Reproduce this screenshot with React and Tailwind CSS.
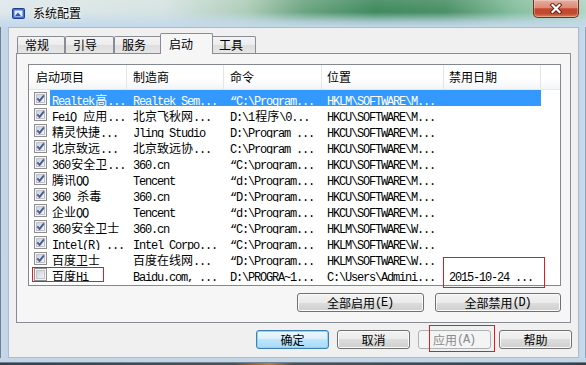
import React from "react";

const NARROW = /[\x20-\x7e\u201c]+|[^\x20-\x7e\u201c]+/g;
function Txt({ s }) {
  const parts = s.match(NARROW) || [];
  return parts.map((p, i) =>
    /^[\x20-\x7e\u201c]/.test(p) ? (
      <span key={i} className="font-['Liberation_Mono',monospace] text-[12px] tracking-[-1.2px] pr-[1.2px]">{p}</span>
    ) : (
      <span key={i} className="font-['Noto_Sans_CJK_SC',sans-serif] text-[12px]">{p}</span>
    )
  );
}

function Check({ on }) {
  return (
    <svg width="13" height="13" viewBox="0 0 13 13" className="shrink-0">
      <defs>
        <linearGradient id="cbg" x1="0" y1="0" x2="1" y2="1">
          <stop offset="0" stopColor="#c9ced6" />
          <stop offset="1" stopColor="#f7f7f7" />
        </linearGradient>
      </defs>
      <rect x="0.5" y="0.5" width="12" height="12" fill="#f5f5f5" stroke="#8e8f8f" />
      <rect x="2.5" y="2.5" width="8" height="8" fill="url(#cbg)" stroke="#bfc3c9" />
      {on && <path d="M3.3 6.3 L5.6 8.9 L10 3.4" fill="none" stroke="#4a5f97" strokeWidth="1.9" />}
    </svg>
  );
}

const M = "HKCU\\SOFTWARE\\M...";
const LM = "HKLM\\SOFTWARE\\M...";
const W = "HKLM\\SOFTWARE\\W...";
const rows = [
  [true, "Realtek高...", "Realtek Sem...", "\u201cC:\\Program...", LM, ""],
  [true, "FeiQ 应用...", "北京飞秋网...", "D:\\1程序\\0...", M, ""],
  [true, "精灵快捷...", "Jling Studio", "D:\\Program ...", M, ""],
  [true, "北京致远...", "北京致远协...", "C:\\Program ...", M, ""],
  [true, "360安全卫...", "360.cn", "\u201cC:\\program...", M, ""],
  [true, "腾讯QQ", "Tencent", "\u201cd:\\Program...", M, ""],
  [true, "360 杀毒", "360.cn", "\u201cD:\\Program...", M, ""],
  [true, "企业QQ", "Tencent", "\u201cd:\\Program...", M, ""],
  [true, "360安全卫士", "360.cn", "\u201cC:\\Program...", W, ""],
  [true, "Intel(R) ...", "Intel Corpo...", "\u201cC:\\Program...", W, ""],
  [true, "百度卫士", "百度在线网...", "\u201cD:\\Program...", W, ""],
  [false, "百度Hi", "Baidu.com, ...", "D:\\PROGRA~1...", "C:\\Users\\Admini...", "2015-10-24 ..."],
];

const headers = ["启动项目", "制造商", "命令", "位置", "禁用日期"];
const hCls = [
  "w-[98px] pl-[7px]",
  "w-[97px] pl-[6px]",
  "w-[98px] pl-[6px]",
  "w-[122px] pl-[5px]",
  "w-[97px] pl-[5px]",
];
const cCls = ["w-[97px] pl-[6px]", "w-[98px] pl-[6px]", "w-[122px] pl-[5px]", "w-[97px] pl-[5px]"];

function ListView() {
  return (
    <div className="w-[533px] h-[222px] shrink-0 border border-[#828790] bg-white flex flex-col overflow-hidden">
      <div className="flex h-[25px] shrink-0 bg-[linear-gradient(#ffffff_0%,#ffffff_55%,#f4f5f7_100%)] border-b border-[#e5e7ea]">
        {headers.map((h, i) => (
          <div key={i} className={`${hCls[i]} shrink-0 border-r border-[#e2e5e9] flex items-center text-[12px] text-black leading-none`}>
            {h}
          </div>
        ))}
        <div className="flex-1" />
      </div>
      {rows.map((r, ri) => {
        const sel = ri === 0;
        return (
          <div key={ri} className={`flex h-[16px] shrink-0 leading-[16px] whitespace-pre ${sel ? "text-white" : "text-black"}`}>
            <div className="w-[98px] shrink-0 pl-[5px] flex items-center">
              <Check on={r[0]} />
              <div className={`ml-[3px] flex-1 h-full pl-[2px] overflow-hidden ${sel ? "bg-[#3399ff]" : ""}`}>
                <Txt s={r[1]} />
              </div>
            </div>
            {r.slice(2).map((c, ci) => (
              <div key={ci} className={`${cCls[ci]} shrink-0 h-full overflow-hidden ${sel ? "bg-[#3399ff]" : ""}`}>
                <Txt s={c} />
              </div>
            ))}
          </div>
        );
      })}
    </div>
  );
}

const BTN = "h-[19px] shrink-0 rounded-[3px] border flex items-center justify-center leading-none";
const NORMAL = "border-[#707070] bg-[linear-gradient(#f2f2f2_0%,#ebebeb_50%,#dddddd_50%,#cfcfcf_100%)] shadow-[inset_0_0_0_1px_#fbfbfb] text-black";
const DEFAULT = "border-[#3c7fb1] bg-[linear-gradient(#eaf6fd_0%,#d9f0fc_50%,#bee6fd_50%,#a7d9f5_100%)] shadow-[inset_0_0_0_1px_#8fd3f5] text-black";
const DISABLED = "border-[#adb2b5] bg-[#f4f4f4] text-[#8a8a8a]";

function Tab({ label, cls, active }) {
  return active ? (
    <div className={`${cls} relative z-10 -mb-px h-[21px] shrink-0 border border-b-0 border-[#898c95] rounded-t-[2px] bg-[#f6f6f6] flex items-center pl-[8px] text-[12px] leading-none text-black`}>
      {label}
    </div>
  ) : (
    <div className={`${cls} h-[17px] shrink-0 border border-b-0 border-[#898c95] rounded-t-[2px] bg-[linear-gradient(#f4f4f4_0%,#ececec_50%,#dedede_50%,#e6e6e6_100%)] flex items-center pl-[7px] text-[12px] leading-none text-black`}>
      {label}
    </div>
  );
}

export default function App() {
  return (
    <div className="relative w-[586px] h-[365px] overflow-hidden flex flex-col bg-[#c5d8e9] font-['Noto_Sans_CJK_SC',sans-serif]">
      {/* title bar */}
      <div className="h-[27px] shrink-0 flex items-start bg-[image:linear-gradient(180deg,rgba(255,255,255,0.1)_0%,rgba(200,222,238,0)_45%,rgba(196,218,236,0.75)_80%,#c5d8e9_100%),linear-gradient(90deg,#dfe8eb_0%,#d5e3e2_28%,#aecdb9_42%,#6aa480_52%,#3f8a5f_64%,#4a9066_76%,#86bf9f_88%,#b0d5c3_100%)]">
        <div className="flex items-center h-[26px] pl-[12px] gap-[8px]">
          <svg width="13" height="11" viewBox="0 0 13 11">
            <rect x="0.5" y="0.5" width="12" height="10" rx="1" fill="#4470d0" stroke="#1f3d92" />
            <rect x="2.5" y="2.5" width="8" height="6" fill="#e6eeff" />
            <path d="M3 8 L6 4.5 L9 8 Z" fill="#2c56b8" />
          </svg>
          <span className="text-[12px] leading-none text-black [text-shadow:0_0_4px_#ffffff,0_0_2px_#ffffff]">系统配置</span>
        </div>
        <div className="flex-1" />
        <div className="mr-[7px] w-[46px] h-[18px] rounded-b-[5px] border border-t-0 border-[#7a2c1f] bg-[linear-gradient(#e9ab9c_0%,#dc8b79_45%,#c6462d_52%,#c24a2e_80%,#d8845e_100%)] shadow-[inset_0_0_0_1px_rgba(255,255,255,0.3)] flex items-center justify-center">
          <svg width="14" height="11" viewBox="0 0 14 11">
            <path d="M3.5 2 L10.5 9 M10.5 2 L3.5 9" stroke="#5a2015" strokeWidth="4" strokeLinecap="square" />
            <path d="M3.5 2 L10.5 9 M10.5 2 L3.5 9" stroke="#ffffff" strokeWidth="2.2" strokeLinecap="square" />
          </svg>
        </div>
      </div>

      {/* body */}
      <div className="flex h-[331px] shrink-0">
        <div className="w-[8px] shrink-0 bg-[linear-gradient(90deg,#6f8193_0px,#6f8193_1px,#c6d8e8_1px,#c2d5e6_100%)]" />
        <div className="w-[571px] shrink-0 border border-[#a9bccf] bg-[#f0f0f0] pt-[5px] pl-[7px] pr-[6px] flex flex-col">
          {/* tabs */}
          <div className="flex items-end h-[20px] pl-[1px] shrink-0">
            <Tab label="常规" cls="w-[48px]" />
            <Tab label="引导" cls="w-[49px]" />
            <Tab label="服务" cls="w-[48px]" />
            <Tab label="启动" cls="w-[53px] -ml-[2px]" active />
            <Tab label="工具" cls="w-[45px] -ml-[2px]" />
          </div>
          {/* panel */}
          <div className="w-[555px] h-[270px] shrink-0 border border-[#898c95] bg-[#f6f6f6] pl-[11px] pt-[10px] flex flex-col">
            <ListView />
            <div className="flex justify-end gap-[11px] mt-[7px] pr-[9px]">
              <div className={`${BTN} ${NORMAL} w-[127px]`}>
                <Txt s="全部启用(E)" />
              </div>
              <div className={`${BTN} ${NORMAL} w-[126px]`}>
                <Txt s="全部禁用(D)" />
              </div>
            </div>
          </div>
          {/* dialog buttons */}
          <div className="flex justify-end gap-[8px] mt-[7px]">
            <div className={`${BTN} ${DEFAULT} w-[73px] text-[12px]`}>确定</div>
            <div className={`${BTN} ${NORMAL} w-[73px] text-[12px]`}>取消</div>
            <div className={`${BTN} ${DISABLED} w-[73px]`}>
              <Txt s="应用(A)" />
            </div>
            <div className={`${BTN} ${NORMAL} w-[73px] text-[12px]`}>帮助</div>
          </div>
        </div>
        <div className="w-[7px] shrink-0 bg-[linear-gradient(90deg,#c2d6e7_0%,#c8dbea_80%,#6f8193_100%)]" />
      </div>
      <div className="h-[4px] shrink-0 bg-[#c2d6e8]" />
      <div className="h-[1px] shrink-0 bg-[#6f8193]" />
      <div className="flex-1 bg-[linear-gradient(90deg,#3b3f45_0%,#55504a_40%,#8a5a2a_42%,#c77a30_46%,#55504a_50%,#3b3f45_100%)]" />

      {/* red annotation boxes */}
      <div className="absolute left-[32px] top-[267px] w-[72px] h-[15px] border border-[#e31b23]" />
      <div className="absolute left-[443px] top-[257px] w-[102px] h-[31px] border border-[#e31b23]" />
      <div className="absolute left-[429px] top-[325px] w-[66px] h-[27px] border border-[#e31b23]" />
    </div>
  );
}
